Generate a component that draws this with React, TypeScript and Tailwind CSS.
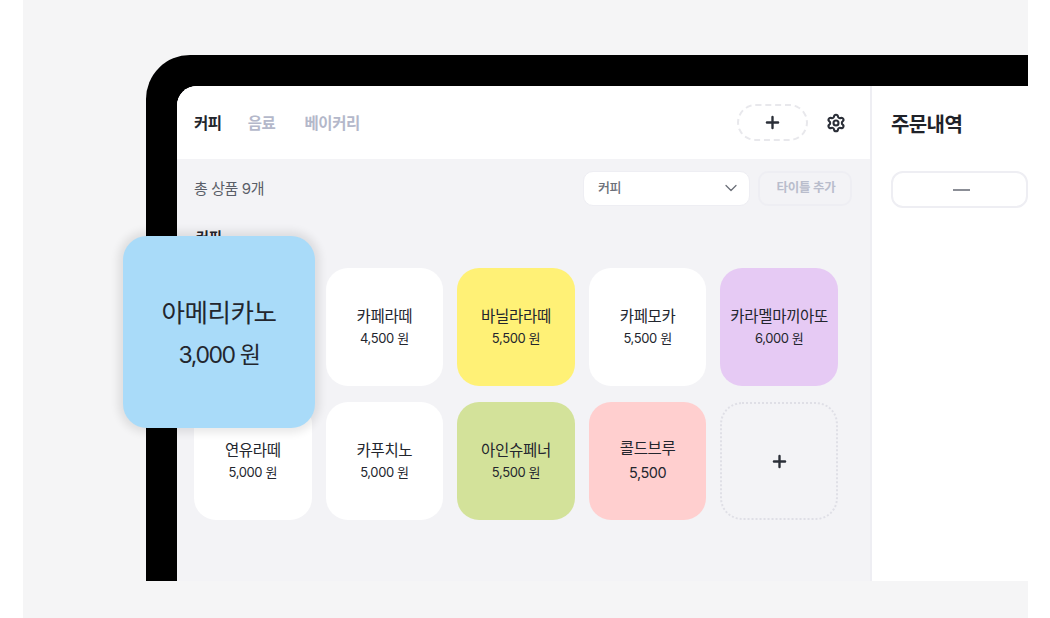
import React from 'react';
import { ChevronDown, Plus, Settings } from 'lucide-react';

interface Menu {
  name: string;
  price: string;
  color: string;
}

const menus: Menu[] = [
  { name: '카페라떼', price: '4,500 원', color: 'bg-white' },
  { name: '바닐라라떼', price: '5,500 원', color: 'bg-[#fff176]' },
  { name: '카페모카', price: '5,500 원', color: 'bg-white' },
  { name: '카라멜마끼아또', price: '6,000 원', color: 'bg-[#e6caf4]' },
  { name: '연유라떼', price: '5,000 원', color: 'bg-white' },
  { name: '카푸치노', price: '5,000 원', color: 'bg-white' },
  { name: '아인슈페너', price: '5,500 원', color: 'bg-[#d3e29a]' },
];

const MenuCard = ({ menu }: { menu: Menu }) => (
  <div className={`h-[118px] rounded-[22px] flex flex-col items-center justify-center ${menu.color}`}>
    <span className="text-[15.5px] leading-[23px] text-[#23262e] tracking-[-0.3px] whitespace-nowrap">{menu.name}</span>
    <span className="text-[13px] leading-[21px] text-[#23262e] tracking-[-0.4px]">{menu.price}</span>
  </div>
);

export default function App() {
  return (
    <div className="w-[1050px] h-[618px] bg-white overflow-hidden font-['Inter','Noto_Sans_CJK_KR',sans-serif]">
      <div className="relative ml-[23px] w-[1005px] h-full bg-[#f5f5f6] pt-[55px] pl-[123px]">
        <div className="h-[526px] border-t-[31px] border-l-[31px] border-black rounded-tl-[44px] bg-black">
          <div className="flex h-full rounded-tl-[20px] overflow-hidden bg-white">
            {/* Left: product area */}
            <div className="w-[695px] flex flex-col bg-[#f3f3f6] border-r-2 border-[#eeeef3]">
              <div className="h-[73px] shrink-0 bg-white flex items-center pl-[17px] pr-[24px]">
                <span className="pt-[2px] text-[15.5px] font-bold text-[#22252c] tracking-[-0.4px]">커피</span>
                <span className="pt-[2px] ml-[26px] text-[15.5px] font-bold text-[#b4b8ca] tracking-[-0.4px]">음료</span>
                <span className="pt-[2px] ml-[29px] text-[15.5px] font-bold text-[#b4b8ca] tracking-[-0.4px]">베이커리</span>
                <div className="ml-auto w-[71px] h-[37px] rounded-full border-2 border-dashed border-[#e8e8ec] flex items-center justify-center">
                  <Plus size={19} strokeWidth={3} className="text-[#2b2f38]" />
                </div>
                <Settings size={20} strokeWidth={2.5} className="ml-[18px] text-[#2b2f38]" />
              </div>

              <div className="flex-1 pl-[17px] pr-[17px]">
                <div className="flex items-center h-[58px]">
                  <span className="pt-[2px] text-[15px] text-[#5a5e68] tracking-[-0.4px]">총 상품 9개</span>
                  <div className="ml-auto w-[167px] h-[35px] rounded-[10px] bg-white border border-[#eeeef3] flex items-center justify-between pl-[14px] pr-[8px]">
                    <span className="text-[13px] font-medium text-[#6b6f78] tracking-[-0.4px]">커피</span>
                    <ChevronDown size={20} strokeWidth={1.5} className="text-[#6b6f78]" />
                  </div>
                  <div className="ml-[8px] mr-[1px] w-[94px] h-[35px] rounded-[10px] border-2 border-[#eeeef3] flex items-center justify-center pl-[2px] text-[12.5px] font-semibold text-[#b9bdcc] tracking-[-0.3px]">
                    타이틀 추가
                  </div>
                </div>
                <div className="h-[51px] pt-[10px] pl-[2px] text-[14px] font-bold leading-[20px] text-[#22252c]">커피</div>
                <div className="grid grid-cols-5 gap-x-[14px] gap-y-[16px] w-[644px]">
                  {/* slot left by the card being dragged */}
                  <div className="h-[118px] rounded-[22px] bg-white" />
                  {menus.map((m) => (
                    <MenuCard key={m.name} menu={m} />
                  ))}
                  <div className="h-[118px] rounded-[22px] bg-[#ffcfcf] flex flex-col items-center justify-center">
                    <span className="text-[15.5px] leading-[24px] text-[#23262e] tracking-[-0.3px]">콜드브루</span>
                    <span className="text-[14.5px] leading-[24px] text-[#23262e] tracking-[-0.5px]">5,500</span>
                  </div>
                  <div className="h-[118px] rounded-[22px] border-2 border-dotted border-[#dfdfe6] flex items-center justify-center">
                    <Plus size={19} strokeWidth={3} className="text-[#2b2f38]" />
                  </div>
                </div>
              </div>
            </div>

            {/* Right: order panel */}
            <div className="flex-1 bg-white pl-[19px]">
              <div className="h-[73px] flex items-center text-[20px] font-bold text-[#1f2229] tracking-[-0.6px] pt-[4px]">주문내역</div>
              <div className="mt-[12px] h-[37px] rounded-[12px] border-2 border-[#eeeef3] flex items-center justify-center">
                <span className="ml-[3px] w-[17px] h-[2px] bg-[#8b8e96]" />
              </div>
            </div>
          </div>
        </div>

        {/* Card being dragged */}
        <div className="absolute left-[100px] top-[236px] w-[192px] h-[192px] rounded-[24px] bg-[#a9dbf9] shadow-[0_0_8px_5px_rgba(0,0,0,0.09)] flex flex-col items-center justify-center pt-[3px]">
          <span className="text-[25.5px] leading-[42px] text-[#23262e] tracking-[-0.5px] whitespace-nowrap">아메리카노</span>
          <span className="text-[23px] leading-[42px] text-[#23262e] tracking-[-1.4px]">3,000 원</span>
        </div>
      </div>
    </div>
  );
}
